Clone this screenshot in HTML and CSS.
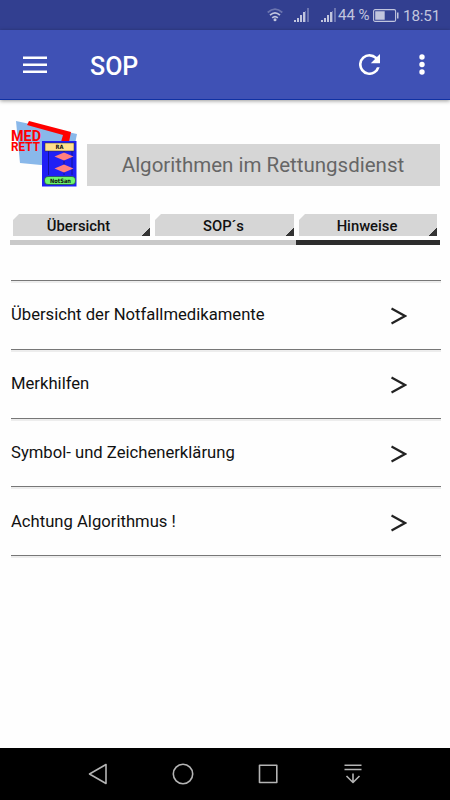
FILE: index.html
```html
<!DOCTYPE html>
<html lang="de">
<head>
    <meta charset="UTF-8">
    <meta name="viewport" content="width=device-width, initial-scale=1.0">
    <title>SOP</title>
    <link rel="stylesheet" href="styles.css">
</head>
<body>
    <div class="statusbar">
        <svg class="wifi" width="16" height="14" viewBox="0 0 16 14" fill="none" stroke="#c1c5de" stroke-width="1.7">
            <path d="M.7 4.5Q8-2.2 15.3 4.5" opacity=".4"/>
            <path d="M3 7.2Q8 2.6 13 7.2M5.2 9.9Q8 7.3 10.8 9.9"/>
            <circle cx="8" cy="11.7" r="1.5" fill="#c1c5de" stroke="none"/>
        </svg>
        <svg class="signal" width="15" height="14" viewBox="0 0 15 14" fill="#c1c5de">
            <path d="M0 12h2v2H0zM3 10h2v4H3zM6 7h2v7H6zM9 4h2v10H9z"/>
            <path d="M11 3h1v11h-1zM13 0h2v14h-2z" opacity=".4"/>
        </svg>
        <svg class="signal second" width="15" height="14" viewBox="0 0 15 14" fill="#c1c5de">
            <path d="M0 12h2v2H0zM3 10h2v4H3zM6 7h2v7H6zM9 4h2v10H9z"/>
            <path d="M11 3h1v11h-1zM13 0h2v14h-2z" opacity=".4"/>
        </svg>
        <span class="percent">44 %</span>
        <svg class="battery" width="26" height="13" viewBox="0 0 26 13">
            <rect x=".6" y=".6" width="22" height="11.8" rx="1.5" fill="none" stroke="#c1c5de" stroke-width="1.1"/>
            <path d="M2.2 2.2h9.5v8.6H2.2zM24 3.5h1.5v6H24z" fill="#c1c5de"/>
        </svg>
        <span class="clock">18:51</span>
    </div>

    <header class="appbar">
        <svg class="menu" width="24" height="18" viewBox="0 0 24 18" fill="#fff">
            <path d="M0 .5h24V3H0zM0 7.5h24V10H0zM0 14.5h24V17H0z"/>
        </svg>
        <h1>SOP</h1>
        <svg class="reload" width="21" height="21" viewBox="4 4 16 16" fill="#fff">
            <path d="M17.65 6.35A7.958 7.958 0 0 0 12 4a8 8 0 1 0 7.73 10h-2.08A6 6 0 1 1 12 6c1.66 0 3.14.69 4.22 1.78L13 11h7V4z"/>
        </svg>
        <svg class="more" width="6" height="21" viewBox="0 0 6 21" fill="#fff">
            <circle cx="3" cy="3" r="2.7"/>
            <circle cx="3" cy="10.5" r="2.7"/>
            <circle cx="3" cy="18" r="2.7"/>
        </svg>
    </header>

    <main>
        <div class="top">
            <svg class="logo" width="68" height="67" viewBox="0 0 68 67">
                <path d="M6 0L67 13 62 38 52 46 10 42z" fill="#89b8ea"/>
                <path d="M19 0L61 11 59 21H51L53 14 17 4z" fill="#f00"/>
                <text class="logo-name big" x="1" y="19.5" textLength="30" lengthAdjust="spacingAndGlyphs">MED</text>
                <text class="logo-name" x="1" y="29.5" textLength="29" lengthAdjust="spacingAndGlyphs">RETT</text>
                <rect x="32" y="20" width="34.5" height="45.5" fill="#2020f5"/>
                <path d="M38.5 29v25M54 29v25M62 29v25" stroke="#12129a"/>
                <rect x="35" y="22" width="29" height="8" fill="#ffe08d" stroke="#332" stroke-width=".5"/>
                <path d="M44.5 35.5L54 31.5 63.5 35.5 54 39.5zM44.5 47.5L54 43.5 63.5 47.5 54 51.5z" fill="#ff7f7f"/>
                <rect x="34.5" y="53.5" width="31" height="8" rx="3.5" fill="#6df56d" stroke="#132" stroke-width=".5" transform="translate(0 2)"/>
                <text class="logo-tag" x="45.5" y="28.3" textLength="8" lengthAdjust="spacingAndGlyphs">RA</text>
                <text class="logo-tag" x="40" y="61.8" textLength="21" lengthAdjust="spacingAndGlyphs">NotSan</text>
            </svg>
            <div class="banner">Algorithmen im Rettungsdienst</div>
        </div>

        <nav class="tabs">
            <div class="tab first"><span>Übersicht</span></div>
            <div class="tab"><span>SOP´s</span></div>
            <div class="tab active"><span>Hinweise</span></div>
        </nav>

        <ul class="list">
            <li><span>Übersicht der Notfallmedikamente</span><svg class="arrow" width="16" height="18" viewBox="0 0 16 18"><path d="M.5 1.5L14 9 .5 16.5"/></svg></li>
            <li><span>Merkhilfen</span><svg class="arrow" width="16" height="18" viewBox="0 0 16 18"><path d="M.5 1.5L14 9 .5 16.5"/></svg></li>
            <li><span>Symbol- und Zeichenerklärung</span><svg class="arrow" width="16" height="18" viewBox="0 0 16 18"><path d="M.5 1.5L14 9 .5 16.5"/></svg></li>
            <li><span>Achtung Algorithmus !</span><svg class="arrow" width="16" height="18" viewBox="0 0 16 18"><path d="M.5 1.5L14 9 .5 16.5"/></svg></li>
            <li class="end"></li>
        </ul>
    </main>

    <footer class="navbar">
        <svg width="22" height="22" viewBox="0 0 22 22"><path d="M19 1.5v19L2.5 11z"/></svg>
        <svg width="22" height="22" viewBox="0 0 22 22"><circle cx="11" cy="11" r="9.7"/></svg>
        <svg width="22" height="22" viewBox="0 0 22 22"><path d="M2.5 2.2h17.3v17.3H2.5z"/></svg>
        <svg width="22" height="22" viewBox="0 0 22 22"><path d="M2.5 2.2h17M2.5 6.5h17M11 10.5v9M4.5 13l6.5 6.5 6.5-6.5"/></svg>
    </footer>
</body>
</html>
```
FILE: styles.css
```css
* {
    margin: 0;
    padding: 0;
    box-sizing: border-box;
}

body {
    display: flex;
    flex-direction: column;
    height: 100vh;
    background: #fefefe;
    font-family: Roboto, sans-serif;
    color: #111;
    overflow: hidden;
}

svg {
    display: block;
    flex: none;
}

/* Status bar */
.statusbar {
    display: flex;
    align-items: center;
    height: 30px;
    padding-left: 267px;
    background: #323f90;
    color: #c1c5de;
    font-size: 15px;
    white-space: nowrap;
}

.signal {
    margin-left: 11px;
}

.signal.second {
    margin-left: 12px;
}

.percent {
    width: 33px;
    margin-left: 2px;
}

.battery {
    margin-left: 2px;
}

.clock {
    margin-left: 4px;
    padding-top: 1px;
    font-size: 15.3px;
    letter-spacing: -0.2px;
}

/* App bar */
.appbar {
    display: flex;
    align-items: center;
    height: 70px;
    padding: 0 25px 0 23px;
    background: #3f51b5;
    border-bottom: 1px solid #1031a3;
    box-shadow: 0 1px 4px rgba(0, 0, 0, 0.4);
}

.appbar h1 {
    margin-left: 43px;
    padding-top: 4px;
    color: #fff;
    font-size: 25px;
    font-weight: 500;
    line-height: 30px;
}

.reload {
    margin-left: auto;
}

.more {
    margin-left: 39px;
}

/* Content */
main {
    flex: 1;
    padding: 21px 10px 0;
}

.top {
    display: flex;
    align-items: flex-end;
    height: 65px;
}

.logo {
    align-self: flex-start;
}

.logo-name {
    fill: #f00;
    font-size: 12px;
    font-weight: 700;
}

.logo-name.big {
    font-size: 14px;
}

.logo-tag {
    fill: #111;
    font-family: "DejaVu Sans", sans-serif;
    font-size: 6px;
    font-weight: 700;
}

.banner {
    flex: 1;
    height: 42px;
    margin-left: 9px;
    padding-right: 1px;
    background: #d6d6d6;
    color: #666;
    font-size: 20.5px;
    line-height: 43px;
    text-align: center;
    white-space: nowrap;
}

.tabs {
    display: grid;
    grid-template-columns: 143px 143px 144px;
    margin-top: 28px;
}

.tab {
    padding: 0 2px 4px;
    border-bottom: 5px solid #c9c9c9;
}

.tab.first,
.tab.active {
    padding: 0 3px 4px;
}

.tab.active {
    border-color: #2d2d2d;
}

.tab span {
    display: block;
    height: 22px;
    padding-right: 2px;
    background: linear-gradient(315deg, #333 6px, transparent 6px), #d6d6d6;
    clip-path: polygon(6px 0, 100% 0, 100% 100%, 0 100%, 0 6px);
    font-size: 14.8px;
    font-weight: 500;
    line-height: 24px;
    text-align: center;
}

.tab.first span {
    padding-right: 6px;
}

/* List */
.list {
    margin: 35px -1px 0 1px;
    list-style: none;
}

.list li {
    display: flex;
    align-items: center;
    justify-content: space-between;
    height: 68.75px;
    padding-right: 34px;
    border-top: 1px solid #777;
    box-shadow: inset 1px 3px 0 -1px #ededed;
    font-size: 16.65px;
}

.list .end {
    height: 4px;
}

.arrow {
    margin-top: 3px;
    fill: none;
    stroke: #222;
    stroke-width: 2.2;
}

/* Navigation bar */
.navbar {
    display: flex;
    align-items: center;
    justify-content: center;
    gap: 63px;
    height: 52px;
    background: #000;
}

.navbar svg {
    fill: none;
    stroke: #b4b4b4;
    stroke-width: 1.6;
    stroke-linejoin: round;
}
```
